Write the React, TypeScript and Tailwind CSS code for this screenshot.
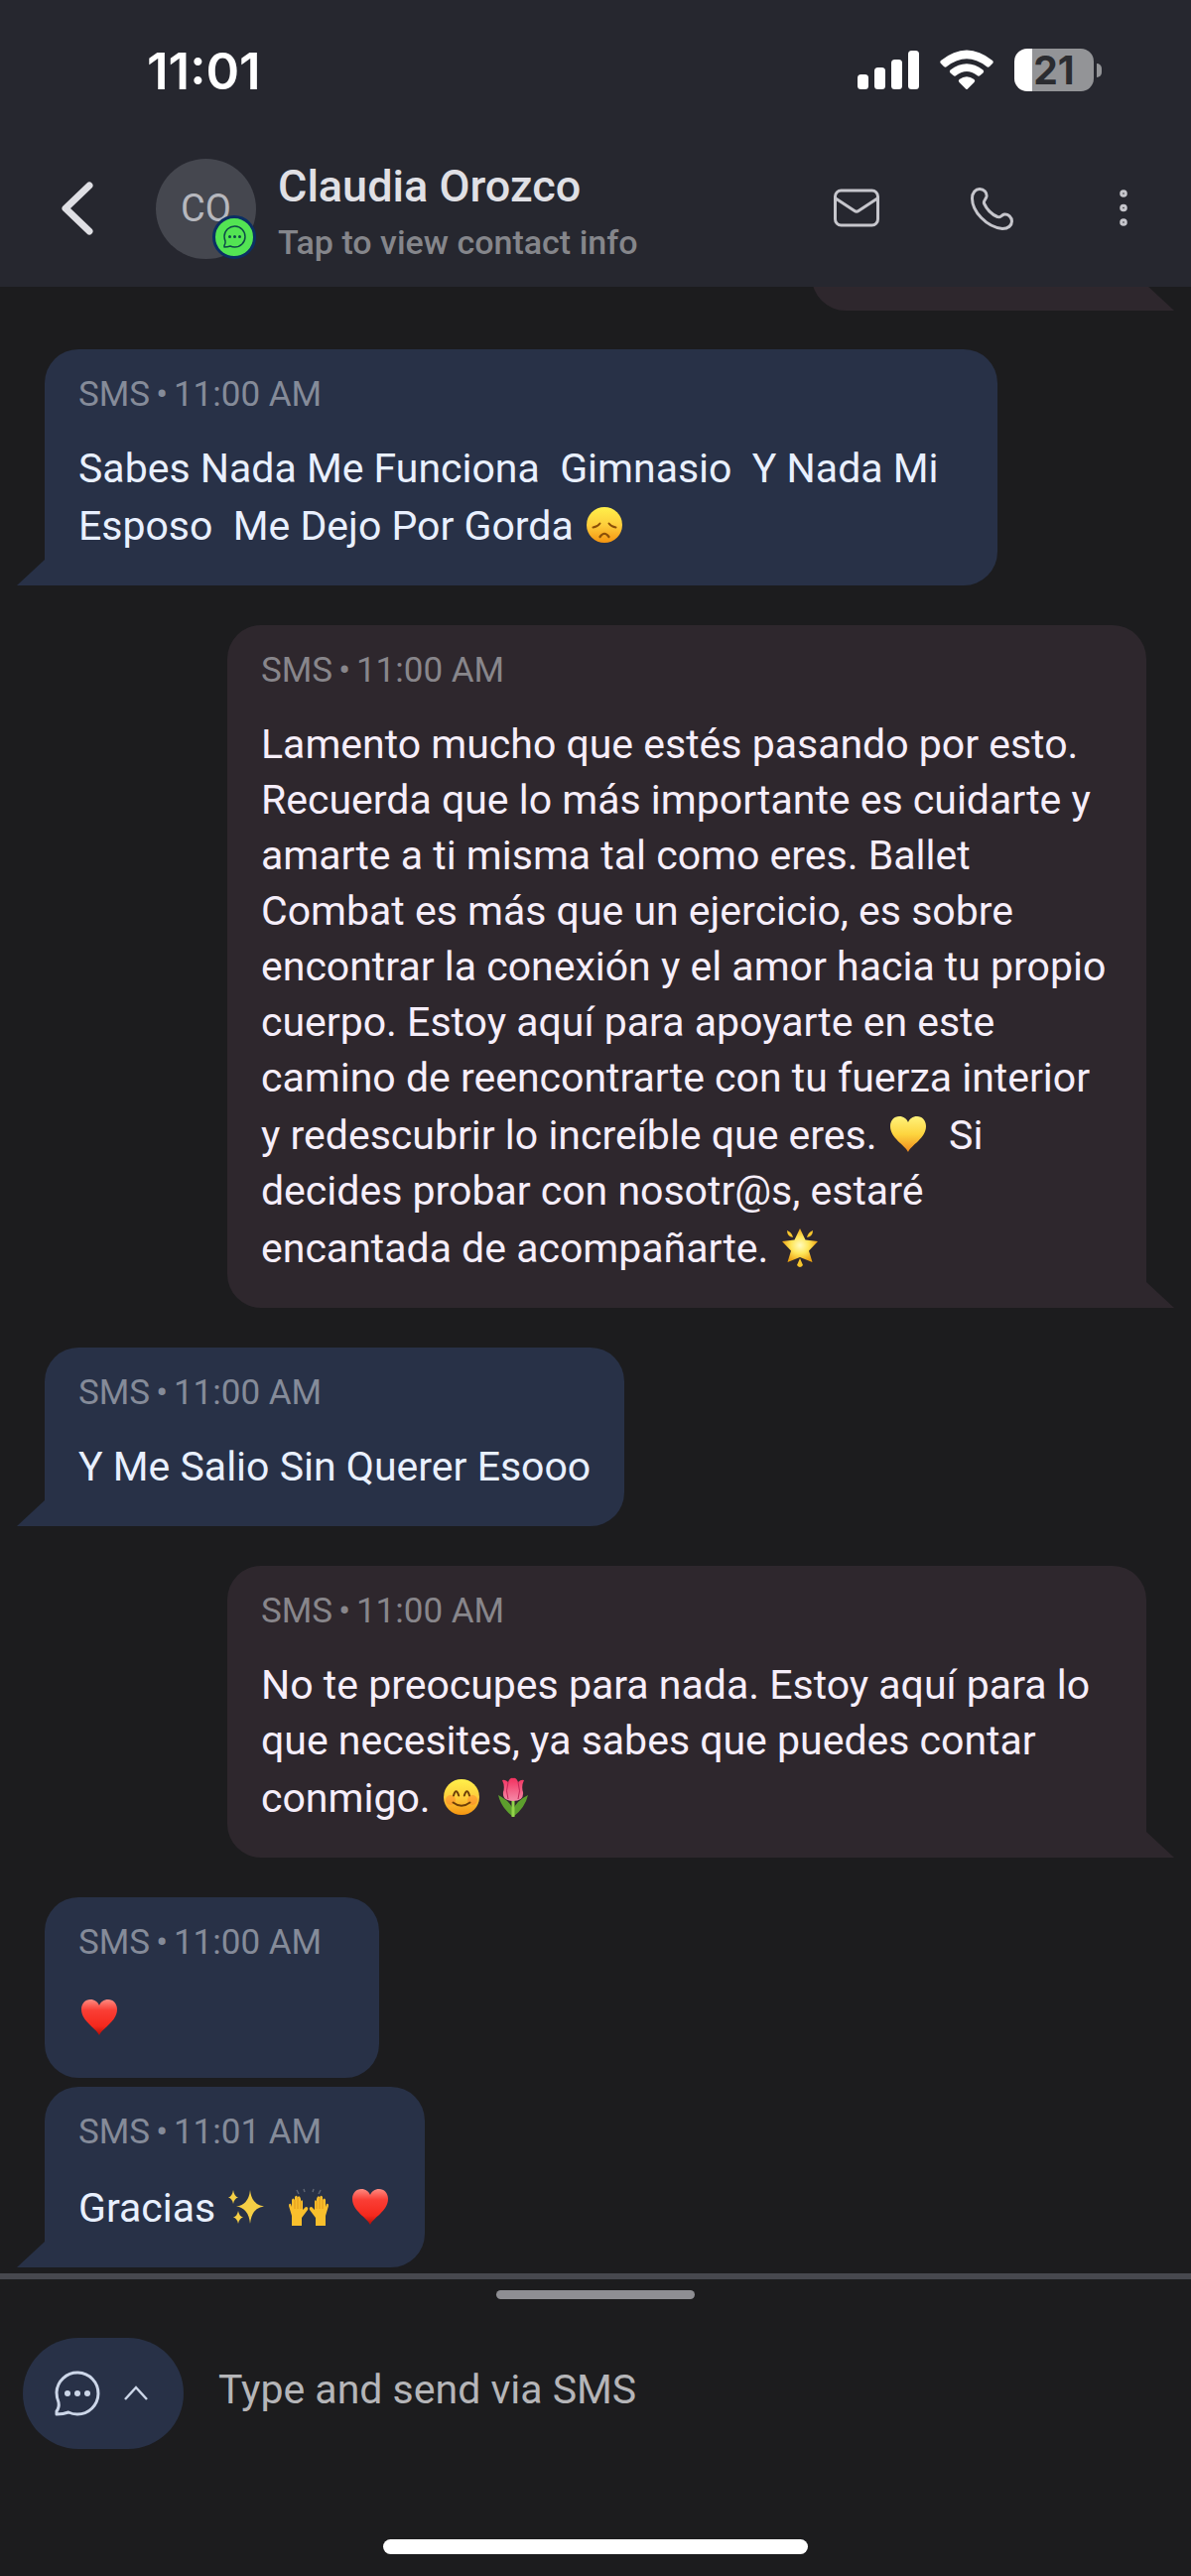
import type { ReactNode } from "react";
import clsx from "clsx";

type EmojiName = "sad" | "smile" | "heart" | "yellowHeart" | "star" | "tulip" | "sparkles" | "hands";

const HEART =
  "M20 38C17 31 2 24 2 12C2 6 6 2 11 2C15.500 2 18.500 4.500 20 8C21.500 4.500 24.500 2 29 2C34 2 38 6 38 12C38 24 23 31 20 38Z";

const emojiArt: Record<EmojiName, { label: string; art: ReactNode }> = {
  sad: {
    label: "😞",
    art: (
      <>
        <circle cx="20" cy="20" r="18" fill="url(#face)" />
        <path d="M8.500 22.500Q13 22 15.500 18.500M31.500 22.500Q27 22 24.500 18.500" fill="none" stroke="#8a4f08" strokeWidth="2" strokeLinecap="round" />
        <path d="M15.500 32Q20 25.500 24.500 32" fill="none" stroke="#8a4f08" strokeWidth="2.200" strokeLinecap="round" />
      </>
    ),
  },
  smile: {
    label: "😊",
    art: (
      <>
        <circle cx="20" cy="20" r="18" fill="url(#face)" />
        <circle cx="9" cy="23" r="5" fill="#ff6a2a" opacity=".35" />
        <circle cx="31" cy="23" r="5" fill="#ff6a2a" opacity=".35" />
        <path d="M12 18.500Q14.500 10 17.200 18.500M22.800 18.500Q25.500 10 28 18.500" fill="none" stroke="#6d3f08" strokeWidth="2" strokeLinecap="round" />
        <path d="M11.500 25.500Q20 32 28.500 25.500" fill="none" stroke="#6d3f08" strokeWidth="2" strokeLinecap="round" />
      </>
    ),
  },
  heart: { label: "❤️", art: <path d={HEART} fill="url(#red)" /> },
  yellowHeart: { label: "💛", art: <path d={HEART} fill="url(#gold)" /> },
  star: {
    label: "🌟",
    art: (
      <>
        <path d="M20 1L25.500 12.500L38 14L29 23.500L32.500 35L20 30L7.500 35L11 23.500L2 14L14.500 12.500Z" fill="url(#glow)" />
        <path d="M7 3Q12 5 13 10Q7 9 7 3ZM33 3Q28 5 27 10Q33 9 33 3ZM20 31L23 38Q20 42 17 38Z" fill="#f7c52c" />
      </>
    ),
  },
  tulip: {
    label: "🌷",
    art: (
      <>
        <path d="M20 40Q8 31 5 18Q17 24 20 33Q23 24 35 18Q32 31 20 40Z" fill="#5d9f2d" />
        <path d="M18.500 23H21.500V40H18.500Z" fill="#93d34a" />
        <path d="M9 3Q12 2 15 5Q17 0 20 1Q23 0 25 5Q28 2 31 3Q28 9 30 15Q31 24 20 24Q9 24 10 15Q12 9 9 3Z" fill="url(#petal)" />
        <path d="M15 5Q12 14 15 22M25 5Q28 14 25 22" fill="none" stroke="#c52458" strokeWidth="1" />
      </>
    ),
  },
  sparkles: {
    label: "✨",
    art: (
      <path
        d="M24 3Q25.500 18 38 19.500Q25.500 21 24 37Q22.500 21 10 19.500Q22.500 18 24 3ZM7 3Q8 9.500 12 10.500Q8 11.500 7 17Q6 11.500 2 10.500Q6 9.500 7 3ZM12 24Q13 29.500 17 30.500Q13 31.500 12 37Q11 31.500 7 30.500Q11 29.500 12 24Z"
        fill="#f6cf45"
      />
    ),
  },
  hands: {
    label: "🙌",
    art: (
      <>
        <path d="M8 3L10 7M15 2L16 5M25 2L24 5M32 3L30 7" stroke="#5c6472" strokeWidth="1.500" />
        <g fill="#f9bf2c">
          <path d="M3 39V29L0 19Q0 16 2 17L3 20V13Q4 10 6 13V10Q8 7 9 11V10Q11 8 12 12V14Q14 12 14 15V23L17 20Q20 20 19 23L13 31V39Z" />
          <path d="M37 39V29L40 19Q40 16 38 17L37 20V13Q36 10 34 13V10Q32 7 31 11V10Q29 8 28 12V14Q26 12 26 15V23L23 20Q20 20 21 23L27 31V39Z" />
        </g>
        <path d="M6 13V22M9 11V22M12 14V22M34 13V22M31 11V22M28 14V22" stroke="#d9901b" strokeWidth=".8" />
      </>
    ),
  },
};

function Emoji({ name }: { name: EmojiName }) {
  const { label, art } = emojiArt[name];
  return (
    <svg role="img" aria-label={label} viewBox="0 0 40 40" className="mx-px mt-[9px] inline-block size-10 align-[-5px]">
      {art}
    </svg>
  );
}

/* Gradients shared by the emoji */
function EmojiDefs() {
  return (
    <svg aria-hidden="true" className="absolute size-0">
      <defs>
        <linearGradient id="face" x1="0" y1="0" x2="0" y2="1">
          <stop offset="0" stopColor="#fff04a" />
          <stop offset=".5" stopColor="#fdce3c" />
          <stop offset="1" stopColor="#f49410" />
        </linearGradient>
        <linearGradient id="red" x1="0" y1="0" x2="0" y2="1">
          <stop offset="0" stopColor="#ff8a80" />
          <stop offset=".3" stopColor="#fa3e35" />
          <stop offset=".75" stopColor="#f5281c" />
          <stop offset="1" stopColor="#b00f08" />
        </linearGradient>
        <linearGradient id="gold" x1="0" y1="0" x2="0" y2="1">
          <stop offset="0" stopColor="#fff27a" />
          <stop offset=".5" stopColor="#fdd53f" />
          <stop offset="1" stopColor="#f08a1c" />
        </linearGradient>
        <radialGradient id="glow">
          <stop offset="0" stopColor="#fffbc0" />
          <stop offset=".5" stopColor="#ffe65a" />
          <stop offset="1" stopColor="#eda414" />
        </radialGradient>
        <linearGradient id="petal" x1="0" y1="0" x2="0" y2="1">
          <stop offset="0" stopColor="#f2315f" />
          <stop offset="1" stopColor="#f58aa8" />
        </linearGradient>
      </defs>
    </svg>
  );
}

interface Message {
  id: number;
  time: string;
  outgoing?: boolean;
  tail?: boolean;
  body: ReactNode;
}

const messages: Message[] = [
  {
    id: 1,
    time: "11:00 AM",
    tail: true,
    body: (
      <>
        {"Sabes Nada Me Funciona  Gimnasio  Y Nada Mi Esposo  Me Dejo Por Gorda "}
        <Emoji name="sad" />
      </>
    ),
  },
  {
    id: 2,
    time: "11:00 AM",
    outgoing: true,
    tail: true,
    body: (
      <>
        {"Lamento mucho que estés pasando por esto. Recuerda que lo más importante es cuidarte y amarte a ti misma tal como eres. Ballet Combat es más que un ejercicio, es sobre encontrar la conexión y el amor hacia tu propio cuerpo. Estoy aquí para apoyarte en este camino de reencontrarte con tu fuerza interior y redescubrir lo increíble que eres. "}
        <Emoji name="yellowHeart" />
        {"  Si decides probar con nosotr@s, estaré encantada de acompañarte. "}
        <Emoji name="star" />
      </>
    ),
  },
  { id: 3, time: "11:00 AM", tail: true, body: "Y Me Salio Sin Querer Esooo" },
  {
    id: 4,
    time: "11:00 AM",
    outgoing: true,
    tail: true,
    body: (
      <>
        {"No te preocupes para nada. Estoy aquí para lo que necesites, ya sabes que puedes contar conmigo. "}
        <Emoji name="smile" /> <Emoji name="tulip" />
      </>
    ),
  },
  { id: 5, time: "11:00 AM", body: <Emoji name="heart" /> },
  {
    id: 6,
    time: "11:01 AM",
    tail: true,
    body: (
      <>
        {"Gracias "}
        <Emoji name="sparkles" />
        {"  "}
        <Emoji name="hands" />
        {"  "}
        <Emoji name="heart" />
      </>
    ),
  },
];

function Tail({ outgoing }: { outgoing?: boolean }) {
  return (
    <svg
      aria-hidden="true"
      viewBox="0 0 28 26"
      className={clsx("absolute bottom-0 h-[26px] w-7", outgoing ? "left-full text-[#2e272d]" : "right-full text-[#283147]")}
    >
      <path d={outgoing ? "M0 0L28 26H0Z" : "M28 0L0 26H28Z"} fill="currentColor" />
    </svg>
  );
}

function Bubble({ message }: { message: Message }) {
  const { time, outgoing, tail, body } = message;

  return (
    <li
      className={clsx(
        "relative rounded-[34px] px-[34px] pt-[26px] pb-8",
        outgoing ? "max-w-[926px] self-end bg-[#2e272d] text-[#f6eefa]" : "max-w-[960px] self-start bg-[#283147] text-[#e9f0ff]",
        tail && (outgoing ? "rounded-br-none" : "rounded-bl-none"),
        tail ? "mb-10" : "mb-[9px]",
        "last:mb-0"
      )}
    >
      <p className={clsx("pr-6 text-[35px] leading-10", outgoing ? "text-[#88868b]" : "text-[#858b99]")}>
        SMS<span className="px-[6px]">•</span>{time}
      </p>
      <p className="mt-[26px] text-[41px] leading-[56px] whitespace-pre-wrap">{body}</p>
      {tail && <Tail outgoing={outgoing} />}
    </li>
  );
}

function ChatIcon({ className }: { className: string }) {
  return (
    <svg aria-hidden="true" viewBox="0 0 46 46" className={className} fill="none" stroke="currentColor" strokeWidth="3" strokeLinejoin="round">
      <path d="M2 44V41Q5 37 4 32Q2 27 2 22A21 21 0 1 1 23 44Q18 44 14 42Q9 44 2 44Z" />
      <g fill="currentColor" stroke="none">
        <circle cx="13" cy="23" r="3" />
        <circle cx="23" cy="23" r="3" />
        <circle cx="33" cy="23" r="3" />
      </g>
    </svg>
  );
}

function StatusBar() {
  return (
    <div className="flex h-[100px] items-end justify-between pr-[90px] pl-[148px]">
      <span className="font-[Inter,sans-serif] text-[51px] leading-[56px] font-semibold text-white">11:01</span>
      <div className="mb-2 flex items-center gap-[21px]">
        <svg role="img" aria-label="Signal" viewBox="0 0 62 43" className="h-[43px] w-[62px] fill-white">
          <rect x="0" y="26" width="11" height="15" rx="3.500" />
          <rect x="17" y="19" width="11" height="22" rx="3.500" />
          <rect x="34" y="11" width="11" height="30" rx="3.500" />
          <rect x="51" y="2" width="11" height="39" rx="3.500" />
        </svg>
        <svg role="img" aria-label="Wi-Fi" viewBox="0 0 54 43" className="h-[43px] w-[54px] fill-white">
          <path d="M1 12Q27-9 53 12Q54.500 13.500 53 15L50 18Q48.500 19.500 47 18Q27 2.500 7 18Q5.500 19.500 4 18L1 15Q-.5 13.500 1 12Z" />
          <path d="M10.500 21.500Q27 9 43.500 21.500Q45 23 43.500 24.500L40.500 27Q39 28.500 37.500 27Q27 19 16.500 27Q15 28.500 13.500 27L10.500 24.500Q9 23 10.500 21.500Z" />
          <path d="M19.500 31Q27 25.500 34.500 31Q36 32.500 34.500 34L28 40.500Q27 41.500 26 40.500L19.500 34Q18 32.500 19.500 31Z" />
        </svg>
        <div className="flex items-center gap-[3px]">
          <div className="flex h-[43px] w-20 items-center justify-center overflow-hidden rounded-[13px] bg-linear-to-r from-white from-22% to-[#939497] to-22% font-[Inter,sans-serif] text-[39px] leading-none font-bold text-[#2b2c30]">
            21
          </div>
          <span className="h-[14px] w-[5px] rounded-r-full bg-[#939497]" />
        </div>
      </div>
    </div>
  );
}

function ChatHeader() {
  return (
    <header className="bg-[#26272f]">
      <StatusBar />
      <div className="flex h-[189px] items-center pt-[45px] pr-[46px] pb-[14px] pl-[56px]">
        <button type="button" aria-label="Back" className="mr-[57px] text-[#dfdfe4]">
          <svg viewBox="0 0 44 60" className="h-[60px] w-11" fill="none" stroke="currentColor" strokeWidth="7" strokeLinecap="round" strokeLinejoin="round">
            <path d="M34 7L10 30L34 53" />
          </svg>
        </button>
        <div className="relative flex size-[101px] shrink-0 items-center justify-center rounded-full bg-[#45474f] text-[38px] text-[#b7b8be]">
          CO
          <span className="absolute right-0 bottom-0 flex size-11 items-center justify-center rounded-full border-3 border-[#0b2f63] bg-[#53e453] text-[#0c4a48]">
            <ChatIcon className="size-[23px]" />
          </span>
        </div>
        <div className="ml-[22px] min-w-0 flex-1 pt-3">
          <h1 className="text-[45px] leading-[56px] font-medium text-[#e0e0e5]">Claudia Orozco</h1>
          <button type="button" className="block text-[34px] leading-[56px] font-medium text-[#85868b]">
            Tap to view contact info
          </button>
        </div>
        <div className="flex items-center text-[#c6c6cc]">
          <button type="button" aria-label="Send email" className="mr-[86px]">
            <svg viewBox="0 0 50 50" className="size-[50px]" fill="none" stroke="currentColor" strokeWidth="3" strokeLinejoin="round">
              <rect x="3.500" y="7" width="43" height="35" rx="6" />
              <path d="M4 15L23 27.500Q25 29 27 27.500L46 15" />
            </svg>
          </button>
          <button type="button" aria-label="Call" className="mr-[86px]">
            <svg viewBox="0 0 50 50" className="size-[50px]" fill="none" stroke="currentColor" strokeWidth="3" strokeLinecap="round" strokeLinejoin="round">
              <path d="M5.500 15C5.500 9 9 5.500 13 5.500C17.500 5.500 20.500 9 20 13C19.500 16 16.500 17 17.500 20C20.500 26.500 25 31 31 33.500C34 35 35 31.500 38 31C42 30.500 45.500 34 45.500 38C45.500 42 42 45.500 36 45.500C20 44 5.500 28 5.500 15Z" />
            </svg>
          </button>
          <button type="button" aria-label="More options">
            <svg viewBox="0 0 44 50" className="h-[50px] w-11" fill="none" stroke="currentColor" strokeWidth="3">
              <circle cx="22" cy="10" r="2.300" />
              <circle cx="22" cy="24.500" r="2.300" />
              <circle cx="22" cy="39" r="2.300" />
            </svg>
          </button>
        </div>
      </div>
    </header>
  );
}

function Composer() {
  return (
    <footer className="flex flex-1 flex-col border-t-6 border-[#47484e]">
      <div className="mt-[11px] h-[9px] w-[200px] self-center rounded-full bg-[#8e8e93]" />
      <form className="mt-[39px] flex items-center pr-6 pl-[23px]">
        <button type="button" aria-label="Change channel" className="flex h-28 w-[162px] shrink-0 items-center gap-6 rounded-full bg-[#283147] pl-8 text-[#ccd6e8]">
          <ChatIcon className="size-[46px]" />
          <svg aria-hidden="true" viewBox="0 0 24 16" className="h-4 w-6" fill="none" stroke="currentColor" strokeWidth="2.500">
            <path d="M1 14L12 2L23 14" />
          </svg>
        </button>
        <input
          type="text"
          aria-label="Message"
          placeholder="Type and send via SMS"
          className="mb-2 ml-[35px] min-w-0 flex-1 bg-transparent text-[41px] leading-[56px] text-white outline-none placeholder:text-[#b5b5b8]"
        />
      </form>
      <div className="mt-auto mb-[22px] h-[15px] w-[428px] self-center rounded-full bg-white" />
    </footer>
  );
}

export default function App() {
  return (
    <div className="flex min-h-screen flex-col bg-[#1c1c1e] font-[Roboto,sans-serif]">
      <EmojiDefs />
      <ChatHeader />
      <main className="overflow-hidden pr-[45px] pb-[6px] pl-[45px]">
        {/* Previous message, scrolled under the header */}
        <div className="relative -mt-14 ml-auto h-20 w-[337px] rounded-bl-[34px] bg-[#2e272d]">
          <Tail outgoing />
        </div>
        <ul className="mt-[39px] flex flex-col">
          {messages.map((message) => (
            <Bubble key={message.id} message={message} />
          ))}
        </ul>
      </main>
      <Composer />
    </div>
  );
}
